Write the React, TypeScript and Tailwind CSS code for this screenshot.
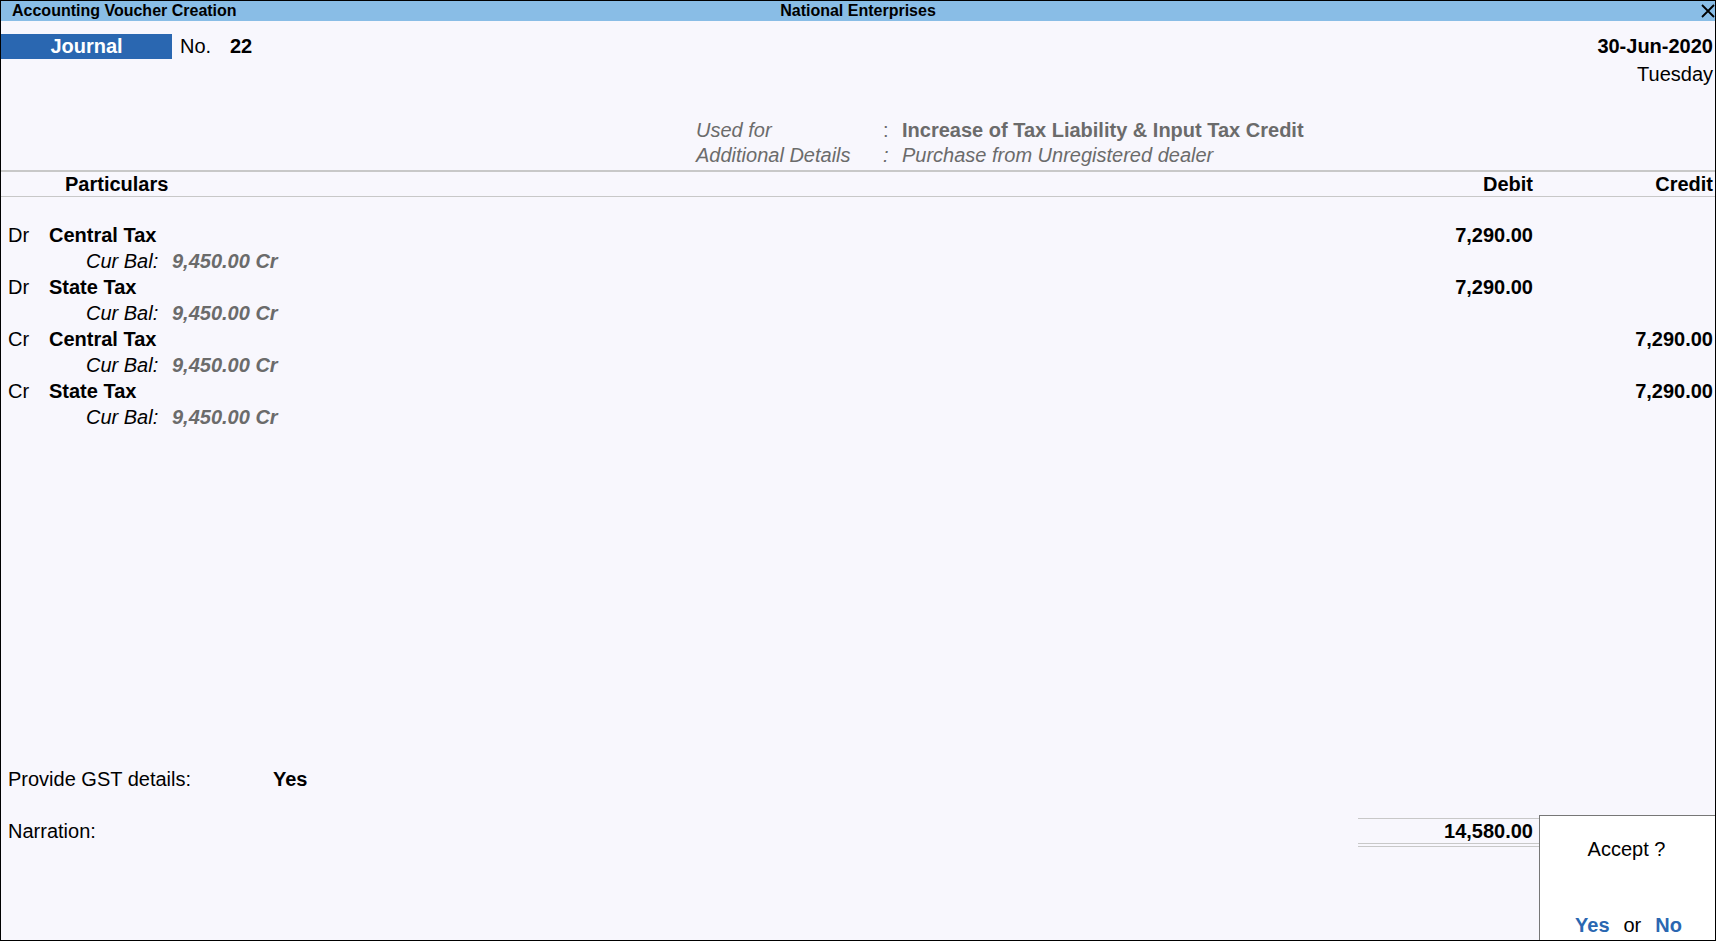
const entries = [
  { type: "Dr", ledger: "Central Tax", bal: "9,450.00 Cr", debit: "7,290.00", credit: "" },
  { type: "Dr", ledger: "State Tax", bal: "9,450.00 Cr", debit: "7,290.00", credit: "" },
  { type: "Cr", ledger: "Central Tax", bal: "9,450.00 Cr", debit: "", credit: "7,290.00" },
  { type: "Cr", ledger: "State Tax", bal: "9,450.00 Cr", debit: "", credit: "7,290.00" },
];

function CloseIcon() {
  return (
    <svg width="14" height="14" viewBox="0 0 14 14" className="mt-[3px]">
      <path d="M1 1 L13 13 M13 1 L1 13" stroke="#000" strokeWidth="1.8" fill="none" />
    </svg>
  );
}

function App() {
  return (
    <div className="relative h-[941px] w-[1716px] border border-black bg-[#f8f7fd] font-['Liberation_Sans',Arial,sans-serif] text-[20px] text-black flex flex-col overflow-hidden">
      {/* title bar */}
      <div className="h-[20px] bg-[#89bde6] grid grid-cols-[1fr_auto_1fr] items-center text-[16px] font-bold leading-[20px]">
        <div className="pl-[11px]">Accounting Voucher Creation</div>
        <div>National Enterprises</div>
        <div className="flex justify-end items-start h-full">
          <CloseIcon />
        </div>
      </div>

      {/* voucher header */}
      <div className="flex justify-between pt-[13px] pr-[2px]">
        <div className="flex h-[25px] leading-[25px]">
          <div className="w-[171px] bg-[#2a67b1] text-white font-bold text-center">Journal</div>
          <span className="ml-[8px] w-[50px]">No.</span>
          <span className="font-bold">22</span>
        </div>
        <div className="flex flex-col items-end">
          <div className="h-[25px] leading-[25px] font-bold">30-Jun-2020</div>
          <div className="mt-[3px] h-[25px] leading-[25px]">Tuesday</div>
        </div>
      </div>

      <div className="mt-[31px] pl-[695px] text-[#6b6b6b] leading-[25px]">
        <div className="flex h-[25px]">
          <span className="w-[187px] italic">Used for</span>
          <span className="w-[19px]">:</span>
          <span className="font-bold">Increase of Tax Liability &amp; Input Tax Credit</span>
        </div>
        <div className="flex h-[25px]">
          <span className="w-[187px] italic">Additional Details</span>
          <span className="w-[19px] italic">:</span>
          <span className="italic">Purchase from Unregistered dealer</span>
        </div>
      </div>

      {/* column header */}
      <div className="mt-[2px] h-[27px] border-t-2 border-b border-[#c8c8c8] grid grid-cols-[1fr_180px_180px] pr-[2px] font-bold leading-[24px]">
        <div className="pl-[64px]">Particulars</div>
        <div className="text-right">Debit</div>
        <div className="text-right">Credit</div>
      </div>

      {/* entries */}
      <div className="flex-1 mt-[25px] pr-[2px] leading-[26px]">
        {entries.map((e, i) => (
          <div key={i}>
            <div className="grid grid-cols-[1fr_180px_180px] h-[26px]">
              <div className="flex pl-[7px]">
                <span className="w-[41px]">{e.type}</span>
                <span className="font-bold">{e.ledger}</span>
              </div>
              <div className="text-right font-bold">{e.debit}</div>
              <div className="text-right font-bold">{e.credit}</div>
            </div>
            <div className="flex h-[26px] pl-[85px] italic">
              <span className="w-[86px]">Cur Bal:</span>
              <span className="font-bold text-[#6b6b6b]">{e.bal}</span>
            </div>
          </div>
        ))}
      </div>

      {/* footer */}
      <div className="flex h-[26px] leading-[26px] pl-[7px]">
        <span className="w-[265px]">Provide GST details:</span>
        <span className="font-bold">Yes</span>
      </div>
      <div className="mt-[26px] grid grid-cols-[1fr_181px_176px] pb-[93px]">
        <div className="pl-[7px] leading-[26px]">Narration:</div>
        <div>
          <div className="h-[26px] border-t border-b border-[#c8c8c8] text-right pr-[6px] font-bold leading-[24px]">
            14,580.00
          </div>
          <div className="mt-[2px] h-px bg-[#c8c8c8]"></div>
        </div>
        <div></div>
      </div>

      {/* accept dialog */}
      <div className="absolute right-0 bottom-0 w-[176px] h-[125px] border-l border-t border-[#777777] bg-white flex flex-col items-center justify-between pt-[21px] pb-[3px] leading-[24px]">
        <div className="pr-[2px]">Accept ?</div>
        <div className="flex gap-[14px] pl-[2px]">
          <span className="font-bold text-[#2a67b1]">Yes</span>
          <span>or</span>
          <span className="font-bold text-[#2a67b1]">No</span>
        </div>
      </div>
    </div>
  );
}

export default App;
